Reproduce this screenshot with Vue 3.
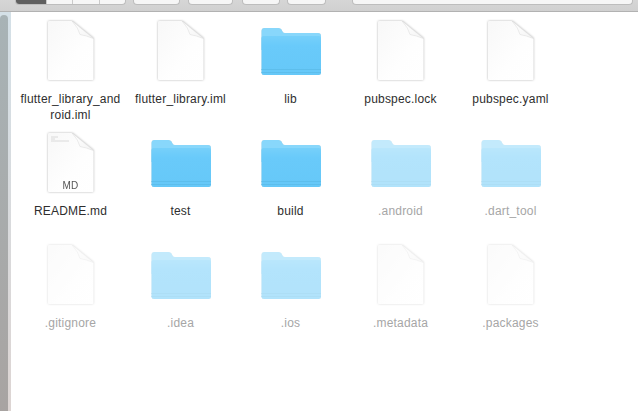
<script setup>
const files = [
  { name: "flutter_library_android.iml", type: "file" },
  { name: "flutter_library.iml", type: "file" },
  { name: "lib", type: "folder" },
  { name: "pubspec.lock", type: "file" },
  { name: "pubspec.yaml", type: "file" },
  { name: "README.md", type: "md" },
  { name: "test", type: "folder" },
  { name: "build", type: "folder" },
  { name: ".android", type: "folder", hidden: true },
  { name: ".dart_tool", type: "folder", hidden: true },
  { name: ".gitignore", type: "file", hidden: true },
  { name: ".idea", type: "folder", hidden: true },
  { name: ".ios", type: "folder", hidden: true },
  { name: ".metadata", type: "file", hidden: true },
  { name: ".packages", type: "file", hidden: true },
];
</script>

<template>
  <div class="window">
    <header class="toolbar">
      <div class="view-switch">
        <span class="seg active"></span>
        <span class="seg"></span>
        <span class="seg"></span>
        <span class="seg"></span>
      </div>
      <span class="tool t1"></span>
      <span class="tool t2"></span>
      <span class="tool t3"></span>
      <span class="tool t4"></span>
      <span class="search"></span>
    </header>

    <div class="body">
      <aside class="sidebar"><span class="thumb"></span></aside>
      <main class="grid">
        <div
          v-for="item in files"
          :key="item.name"
          class="item"
          :class="{ hidden: item.hidden }"
        >
          <svg v-if="item.type === 'folder'" class="icon folder" width="60" height="60" viewBox="0 0 60 60">
            <defs>
              <linearGradient id="folderFront" x1="0" y1="0" x2="0" y2="1">
                <stop offset="0" stop-color="#76d0fa" />
                <stop offset="0.25" stop-color="#69cafa" />
                <stop offset="1" stop-color="#66c8f8" />
              </linearGradient>
            </defs>
            <path d="M0.5 11Q0.5 8 3.5 8H17.5Q19.5 8 20.5 9.5L21.5 11.5Q22.3 13 24 13H57Q60 13 60 16V30H0.5Z" fill="#88d7fb" />
            <path d="M0.5 18Q0.5 16 2.5 16H58Q60 16 60 18V52.5Q60 55 57.5 55H3Q0.5 55 0.5 52.5Z" fill="url(#folderFront)" />
            <path d="M0.5 49.5H60M0.5 52.5H60" stroke="#5dbeec" stroke-width="1" />
          </svg>
          <svg v-else class="icon sheet" width="60" height="60" viewBox="0 0 60 60">
            <defs>
              <linearGradient id="sheetFold" x1="0" y1="0" x2="1" y2="1">
                <stop offset="0" stop-color="#ffffff" />
                <stop offset="1" stop-color="#f4f4f4" />
              </linearGradient>
              <linearGradient id="sheetBody" x1="0" y1="0" x2="1" y2="1">
                <stop offset="0" stop-color="#f8f8f8" />
                <stop offset="0.6" stop-color="#fefefe" />
                <stop offset="1" stop-color="#ffffff" />
              </linearGradient>
            </defs>
            <path d="M8 1H31L52.5 18.5V59Q52.5 60 51.5 60H8Q7 60 7 59V2Q7 1 8 1Z" fill="url(#sheetBody)" />
            <path d="M31 1L52.5 18.5Q45 15.5 39 14.5Q37.5 8 31 1Z" fill="url(#sheetFold)" stroke="#d9d9d9" stroke-width="0.5" />
            <template v-if="item.type === 'md'">
              <path d="M10 5H17M10 7H14M10 9H28" stroke="#dadada" stroke-width="1" />
              <text x="29.5" y="57" text-anchor="middle" class="badge">MD</text>
            </template>
          </svg>
          <span class="label">{{ item.name }}</span>
        </div>
      </main>
    </div>
  </div>
</template>

<style scoped>
.window {
  width: 638px;
  height: 411px;
  display: flex;
  flex-direction: column;
  background: #fff;
  overflow: hidden;
  font-family: "Liberation Sans", Arial, sans-serif;
}

.toolbar {
  height: 11px;
  flex: none;
  display: flex;
  align-items: flex-start;
  padding-left: 15px;
  background: linear-gradient(#d6d6d6, #d0d0d0);
  border-bottom: 1px solid #b2b2b2;
}

.view-switch {
  display: flex;
  height: 4px;
  width: 109px;
  border: 1px solid #bdbdbd;
  border-top: 0;
  border-radius: 0 0 4px 4px;
  background: #f6f6f6;
  overflow: hidden;
}

.seg {
  flex: 1;
  border-left: 1px solid #cacaca;
}

.seg.active {
  flex: none;
  width: 30px;
  border: 0;
  background: #5f5f5f;
}

.tool,
.search {
  height: 4px;
  border: 1px solid #bdbdbd;
  border-top: 0;
  border-radius: 0 0 4px 4px;
  background: #f6f6f6;
}

.t1 { width: 45px; margin-left: 7px; }
.t2 { width: 43px; margin-left: 8px; }
.t3 { width: 36px; margin-left: 9px; }
.t4 { width: 37px; margin-left: 7px; }

.search {
  width: 279px;
  margin-left: 26px;
}

.body {
  flex: 1;
  display: flex;
  min-height: 0;
}

.sidebar {
  width: 11px;
  flex: none;
  padding-top: 3px;
  box-sizing: border-box;
  overflow: hidden;
  background: linear-gradient(#d4e0e7, #ddd5d3);
}

.thumb {
  display: block;
  width: 8px;
  height: 410px;
  border-radius: 4px;
  background: linear-gradient(#a8b3b6, #a8a3a1);
}

.grid {
  flex: none;
  width: 550px;
  padding: 8px 0 0 5px;
  display: grid;
  grid-template-columns: repeat(5, 110px);
  grid-auto-rows: 112px;
}

.item {
  display: flex;
  flex-direction: column;
  align-items: center;
}

.icon {
  flex: none;
  display: block;
}

.folder {
  filter: drop-shadow(0 0.5px 0.6px rgba(0, 0, 0, 0.15));
}

.sheet {
  filter: drop-shadow(0 0.5px 0.8px rgba(0, 0, 0, 0.3));
}

.label {
  margin-top: 11px;
  width: 103px;
  padding-right: 1px;
  box-sizing: border-box;
  font-size: 12px;
  line-height: 16px;
  letter-spacing: 0.2px;
  color: #2e2e2e;
  text-align: center;
  overflow-wrap: anywhere;
}

.hidden .icon {
  opacity: 0.5;
}

.hidden .label {
  color: #a6a6a6;
}

.badge {
  font-family: "Liberation Sans", Arial, sans-serif;
  font-size: 10px;
  letter-spacing: 0.3px;
  fill: #555;
}
</style>

<style>
html,
body {
  margin: 0;
  background: #fff;
}
</style>
